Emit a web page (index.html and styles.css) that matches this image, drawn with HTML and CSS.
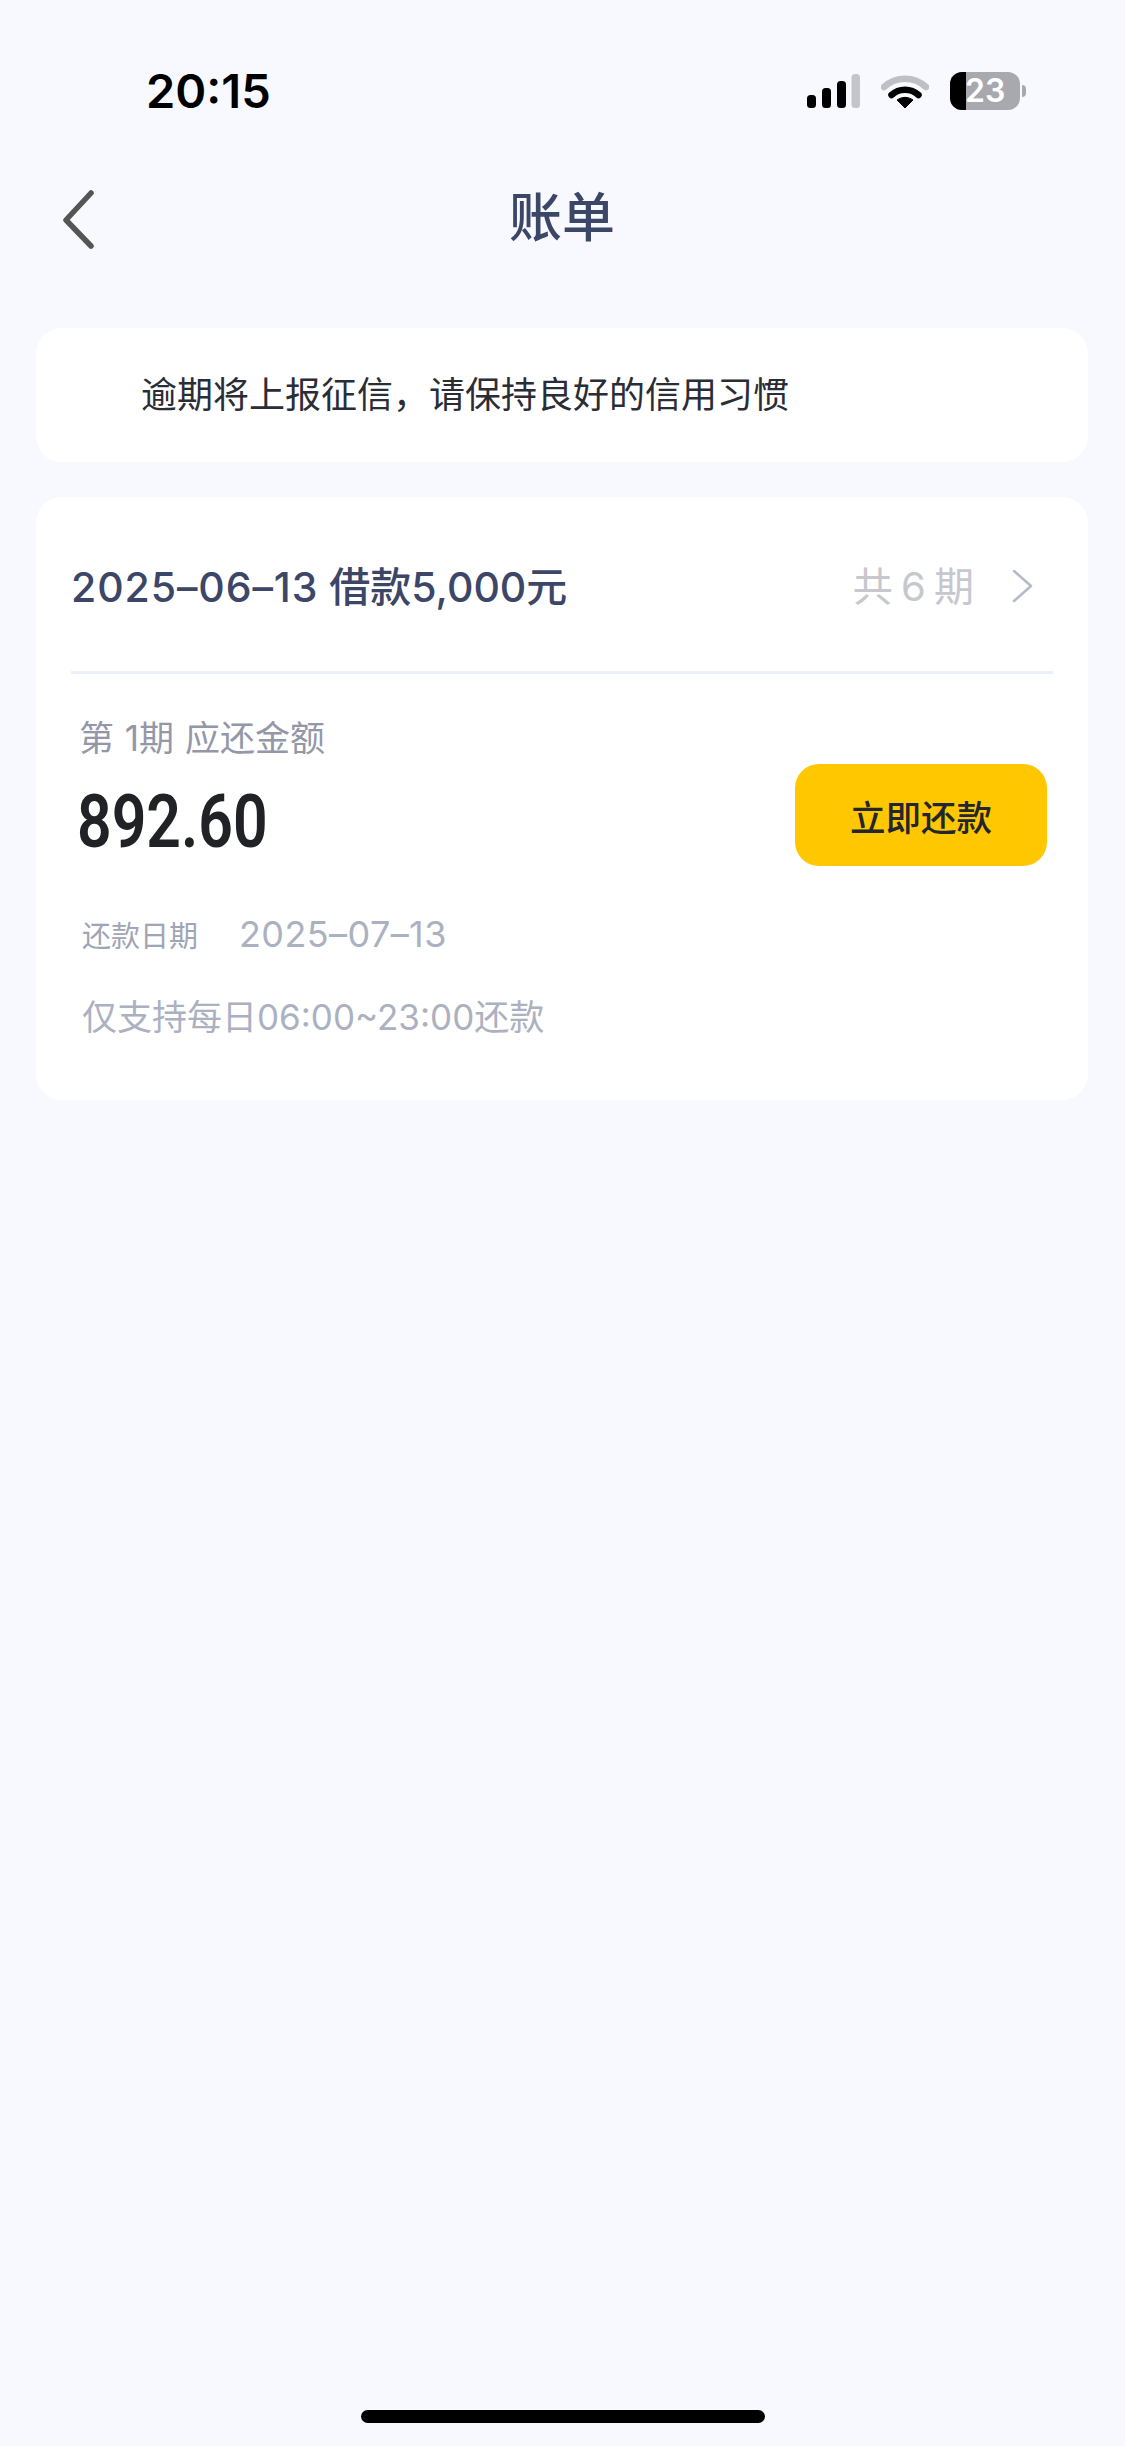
FILE: index.html
```html
<!DOCTYPE html>
<html lang="zh-CN">
<head>
  <meta charset="UTF-8">
  <meta name="viewport" content="width=device-width, initial-scale=1.0">
  <title>账单</title>
  <link rel="stylesheet" href="styles.css">
</head>
<body>
  <div class="page">
    <!-- status bar -->
    <div class="status-bar">
      <span class="time">20:15</span>
      <div class="status-icons">
        <svg class="signal" width="54" height="36" viewBox="0 0 54 36">
          <rect x="1" y="22" width="9" height="13" rx="3.5" fill="#000"/>
          <rect x="16" y="15" width="9" height="20" rx="3.5" fill="#000"/>
          <rect x="31" y="8" width="9" height="27" rx="3.5" fill="#000"/>
          <rect x="45.500" y="1" width="8.500" height="34" rx="3.500" fill="#c3c5cb"/>
        </svg>
        <svg class="wifi" width="48" height="36" viewBox="0 0 48 36">
          <path d="M3 14 C15 3 33 3 45 14" fill="none" stroke="#bfc0c5" stroke-width="6.500" stroke-linecap="round"/>
          <path d="M10.500 22 C18 15 30 15 37.500 22" fill="none" stroke="#000" stroke-width="6.500" stroke-linecap="round"/>
          <path d="M16 27 C21 23.500 27 23.500 32 27 L24 35 Z" fill="#000" stroke="#000" stroke-linejoin="round"/>
        </svg>
        <div class="battery">
          <div class="battery-body">
            <div class="battery-level"></div>
            <span class="battery-num">23</span>
          </div>
          <div class="battery-tip"></div>
        </div>
      </div>
    </div>

    <!-- nav -->
    <div class="nav">
      <svg class="nav-back" width="36" height="60" viewBox="0 0 36 60">
        <path d="M32 4 L7 31 L32 57" fill="none" stroke="#555" stroke-width="5.500" stroke-linecap="round" stroke-linejoin="round"/>
      </svg>
      <h1 class="nav-title">账单</h1>
    </div>

    <div class="notice">逾期将上报征信，请保持良好的信用习惯</div>

    <div class="bill-card">
      <div class="bill-head">
        <div class="bill-name"><span class="bill-date">2025–06–13</span> 借款5,000元</div>
        <div class="bill-total">
          <span>共 6 期</span>
          <svg class="bill-arrow" width="22" height="34" viewBox="0 0 22 34">
            <path d="M2 2 L19 17 L2 32" fill="none" stroke="#b4bac9" stroke-width="2.500" stroke-linecap="round" stroke-linejoin="round"/>
          </svg>
        </div>
      </div>
      <div class="bill-body">
        <div class="bill-row">
          <div class="bill-amount">
            <div class="amount-label">第 1期 应还金额</div>
            <div class="amount-num">892.60</div>
          </div>
          <button type="button" class="pay-btn">立即还款</button>
        </div>
        <div class="due-date">
          <span class="due-label">还款日期</span>
          <span class="due-value">2025–07–13</span>
        </div>
        <div class="pay-hours">仅支持每日06:00~23:00还款</div>
      </div>
    </div>

    <div class="home-bar"></div>
  </div>
</body>
</html>
```

FILE: styles.css
```css
/* Global */
body {
  margin: 0;
  background: #f8f9ff;
  font-family: "Inter", "Noto Sans CJK SC", sans-serif;
  color: #333;
}
.page {
  position: relative;
  height: 2446px;
  overflow: hidden;
  box-sizing: border-box;
  padding: 0 37px 0 36px;
}

/* Status bar */
.status-bar {
  display: flex;
  justify-content: space-between;
  align-items: center;
  height: 72px;
  padding: 55px 62px 0 110px;
}
.time {
  margin-top: -2px;
  font-size: 47px;
  font-weight: 600;
  color: #000;
}
.status-icons {
  display: flex;
  align-items: center;
  gap: 21px;
}
.battery {
  display: flex;
  align-items: center;
  gap: 2px;
}
.battery-body {
  position: relative;
  width: 70px;
  height: 38px;
  border-radius: 12px;
  background: #a8a9ae;
  overflow: hidden;
}
.battery-level {
  width: 16px;
  height: 100%;
  background: #000;
}
.battery-num {
  position: absolute;
  top: 0;
  left: 15px;
  font-size: 32px;
  line-height: 38px;
  font-weight: 600;
  color: #fff;
}
.battery-tip {
  width: 4px;
  height: 12px;
  border-radius: 0 6px 6px 0;
  background: #a8a9ae;
}

/* Nav */
.nav {
  display: flex;
  align-items: center;
  justify-content: center;
  position: relative;
  height: 60px;
  margin-top: 61px;
}
.nav-back {
  position: absolute;
  left: 23px;
  top: 1px;
}
.nav-title {
  margin: 0 0 8px;
  font-size: 53px;
  font-weight: 500;
  color: #3c4667;
}

/* Cards */
.notice {
  margin-top: 80px;
  height: 134px;
  box-sizing: border-box;
  padding: 0 0 7px 105px;
  display: flex;
  align-items: center;
  background: #fff;
  border-radius: 26px;
  font-size: 36px;
  color: #2a2d36;
}
.bill-card {
  margin-top: 35px;
  height: 603px;
  box-sizing: border-box;
  background: #fff;
  border-radius: 26px;
}
.bill-head {
  display: flex;
  justify-content: space-between;
  align-items: center;
  height: 174px;
  margin: 0 35px;
  border-bottom: 3px solid #eceefa;
}
.bill-name {
  font-size: 41px;
  font-weight: 500;
  color: #3c4667;
}
.bill-date {
  letter-spacing: 0.9px;
}
.bill-total {
  display: flex;
  align-items: center;
  gap: 38px;
  padding-right: 19px;
  font-size: 40px;
  word-spacing: -3px;
  color: #c6c8cd;
}
.bill-arrow {
  margin-top: 3px;
}
.bill-body {
  padding: 0 41px 0 43px;
}
.bill-row {
  display: flex;
  justify-content: space-between;
  align-items: flex-end;
}
.amount-label {
  margin-top: 39px;
  font-size: 35px;
  line-height: 50px;
  word-spacing: 1px;
  color: #9397a8;
}
.amount-num {
  margin: 17px 0 0 -2px;
  font-family: "Roboto", sans-serif;
  font-size: 74px;
  line-height: 84px;
  font-weight: 600;
  color: #212226;
  transform: scaleX(0.82);
  transform-origin: left center;
}
.pay-btn {
  width: 252px;
  height: 102px;
  margin-bottom: -2px;
  border: none;
  border-radius: 24px;
  background: #ffc700;
  font-family: inherit;
  font-size: 35.5px;
  font-weight: 500;
  color: #23262f;
}
.due-date {
  display: flex;
  align-items: center;
  gap: 41px;
  margin: 45px 0 0 3px;
  height: 50px;
}
.due-label {
  font-size: 29px;
  color: #a0a5b5;
}
.due-value {
  font-size: 36px;
  letter-spacing: 0.4px;
  color: #abb1c1;
}
.pay-hours {
  margin: 32px 0 0 3px;
  font-size: 35px;
  line-height: 52px;
  color: #abb1c1;
}

/* Home indicator */
.home-bar {
  position: absolute;
  left: 361px;
  bottom: 23px;
  width: 404px;
  height: 13px;
  border-radius: 7px;
  background: #000;
}
```
